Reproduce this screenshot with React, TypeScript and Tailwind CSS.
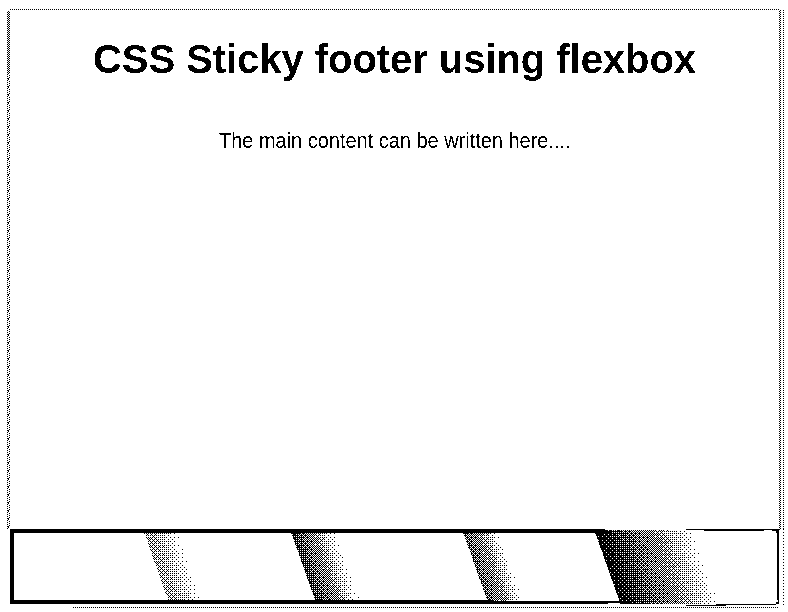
const BAYER = [
  [0, 32, 8, 40, 2, 34, 10, 42],
  [48, 16, 56, 24, 50, 18, 58, 26],
  [12, 44, 4, 36, 14, 46, 6, 38],
  [60, 28, 52, 20, 62, 30, 54, 22],
  [3, 35, 11, 43, 1, 33, 9, 41],
  [51, 19, 59, 27, 49, 17, 57, 25],
  [15, 47, 7, 39, 13, 45, 5, 37],
  [63, 31, 55, 23, 61, 29, 53, 21],
];

type Band = { x: number; width: number; top: number; bottom: number; stops: number[] };

const bands: Band[] = [
  { x: 134, width: 35, top: 4, bottom: 71, stops: [0.42, 0.34, 0.24, 0.12, 0.02] },
  { x: 281, width: 45, top: 3, bottom: 72, stops: [0.82, 0.62, 0.49, 0.2, 0.02] },
  { x: 453, width: 36, top: 3, bottom: 72, stops: [0.7, 0.54, 0.46, 0.2, 0.02] },
  { x: 585, width: 99, top: 1, bottom: 75, stops: [0.97, 0.8, 0.6, 0.48, 0.24, 0.01] },
];

function shade(band: Band): string {
  let d = "";
  for (let y = band.top; y < band.bottom; y++) {
    const left = band.x + (y - 4) * 0.355;
    for (let x = Math.ceil(left); x < left + band.width; x++) {
      const t = ((x - left) / band.width) * (band.stops.length - 1);
      const i = Math.floor(t);
      const a = band.stops[i];
      const b = band.stops[Math.min(i + 1, band.stops.length - 1)];
      const grain = (((x * 73 + y * 151 + x * y * 17) % 23) / 23 - 0.5) * 0.05;
      if (a + (b - a) * (t - i) + grain > (BAYER[y % 8][x % 8] + 1.8) / 65) d += `M${x} ${y}h1v1h-1z`;
    }
  }
  return d;
}

function Footer() {
  return (
    <footer className="relative ml-[3px] h-[75px] w-[769px] border-4 border-r-2 border-black bg-white">
      <svg
        className="absolute -left-1 -top-1"
        width="770"
        height="77"
        viewBox="0 0 770 77"
        shapeRendering="crispEdges"
        aria-hidden="true"
      >
        <path d="M595 0h173v4H595zM598 71h170v5H598zM484 71h114v1H484z" fill="white" />
        <path d="M570 1h26v2h-26zM585 3h17v1h-17zM676 0h94v1h-94zM694 1h60v1h-60zM762 1h7v1h-7zM766 2h3v2h-3zM598 72h14v2h-14zM676 76h40v1h-40zM706 75h60v1h-60zM766 73h3v2h-3z" />
        {bands.map((band) => (
          <path key={band.x} d={shade(band)} />
        ))}
      </svg>
    </footer>
  );
}

function LeftEdge() {
  let d = "";
  for (let y = 1; y < 519; y++) {
    const even = y % 2 === 0;
    if (y < 64) d += even ? `M0 ${y}h1v1h-1zM2 ${y}h1v1h-1z` : `M1 ${y}h1v1h-1z`;
    else if (even) d += `M0 ${y}h1v1h-1z`;
    else d += y % 8 === 5 ? `M1 ${y}h1v1h-1z` : `M2 ${y}h1v1h-1z`;
    if (y >= 64 && y % 8 === 4) d += `M1 ${y}h1v1h-1z`;
  }
  return (
    <svg width="3" height="519" shapeRendering="crispEdges" aria-hidden="true">
      <path d={d} />
    </svg>
  );
}

export default function App() {
  return (
    <div className="h-[612px] w-[788px] overflow-hidden bg-white pl-[7px] pt-[9px] font-['Liberation_Sans',Arial,sans-serif] text-black">
      <svg className="absolute" width="0" height="0" aria-hidden="true">
        <filter id="crisp" x="0" y="0" width="100%" height="100%">
          <feComponentTransfer>
            <feFuncA type="discrete" tableValues="0 1" />
          </feComponentTransfer>
        </filter>
      </svg>
      <div className="flex h-[599px] w-[777px] flex-col">
        <div className="ml-[3px] h-px w-[770px] shrink-0 bg-[repeating-linear-gradient(90deg,#000_0_1px,#fff_1px_2px)]" />
        <div className="flex h-[519px] shrink-0 justify-between">
          <LeftEdge />
          <main className="flex w-[769px] flex-col items-center">
            <h1 className="mt-[25px] whitespace-nowrap text-[40px] font-bold leading-[48px] tracking-[-0.05px] [filter:url(#crisp)]">
              CSS Sticky footer using flexbox
            </h1>
            <div className="mt-[45px] [filter:url(#crisp)]">
              <p className="scale-x-[0.907] whitespace-nowrap text-[22px] leading-[26px]">
                The main content can be written here....
              </p>
            </div>
          </main>
          <div className="flex w-[5px] justify-between">
            <div className="h-full w-[2px] bg-[repeating-conic-gradient(#000_0_25%,#fff_0_50%)] bg-[size:2px_2px]" />
            <div className="h-full w-px bg-[repeating-linear-gradient(180deg,#000_0_1px,#fff_1px_2px)]" />
          </div>
        </div>
        <div className="flex">
          <Footer />
          <div className="ml-1 h-[77px] w-px bg-[repeating-linear-gradient(180deg,#000_0_1px,#fff_1px_3px)]" />
        </div>
        <div className="ml-[66px] mt-px h-px w-[706px] shrink-0 bg-[repeating-linear-gradient(90deg,#000_0_1px,#fff_1px_2px)]" />
      </div>
    </div>
  );
}
